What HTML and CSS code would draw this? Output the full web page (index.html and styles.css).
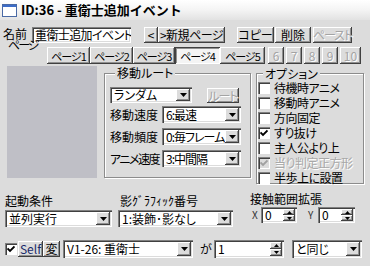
FILE: index.html
```html
<!DOCTYPE html>
<html>
<head>
    <meta charset="utf-8">
    <link rel="stylesheet" href="styles.css">
</head>
<body>
    <div class="title-bar">
        <svg class="app-icon" width="15" height="13" viewBox="0 0 15 13">
            <rect x="0.5" y="0.5" width="14" height="12" fill="#fff" stroke="#4a6aa5"/>
            <rect x="1" y="1" width="13" height="2" fill="#3d6cc8"/>
        </svg>
        <span class="title-text">ID:36 - 重衛士追加イベント</span>
    </div>

    <div class="dialog">
        <!-- name + page commands -->
        <div class="name-row">
            <span class="name-label">名前</span>
            <div class="textbox name-box">重衛士追加イベント</div>
            <div class="btn prev-btn">&lt;</div>
            <div class="btn new-btn">&gt;新規ページ</div>
            <div class="btn copy-btn">コピー</div>
            <div class="btn del-btn">削除</div>
            <div class="btn paste-btn disabled">ペースト</div>
        </div>

        <!-- page tabs -->
        <div class="page-row">
            <span class="page-label">ページ</span>
            <div class="btn tab">ページ1</div>
            <div class="btn tab">ページ2</div>
            <div class="btn tab tab-3">ページ3</div>
            <div class="btn tab tab-4 active">ページ4</div>
            <div class="btn tab tab-5">ページ5</div>
            <div class="btn tab tab-num first disabled">6</div>
            <div class="btn tab tab-num disabled">7</div>
            <div class="btn tab tab-num disabled">8</div>
            <div class="btn tab tab-num disabled">9</div>
            <div class="btn tab tab-num tab-ten disabled">10</div>
        </div>

        <div class="page-body">
            <div class="preview"></div>

            <div class="group route-group">
                <span class="group-title">移動ルート</span>
                <div class="route-top">
                    <div class="combo route-combo">
                        <span class="combo-text">ランダム</span>
                        <span class="btn combo-arrow"><svg width="7" height="4" viewBox="0 0 7 4"><path d="M0 0h7L3.5 4z"/></svg></span>
                    </div>
                    <div class="btn route-btn disabled">ルート</div>
                </div>
                <div class="param-row">
                    <span class="param-label">移動速度</span>
                    <div class="combo param-combo">
                        <span class="combo-text">6:最速</span>
                        <span class="btn combo-arrow"><svg width="7" height="4" viewBox="0 0 7 4"><path d="M0 0h7L3.5 4z"/></svg></span>
                    </div>
                </div>
                <div class="param-row">
                    <span class="param-label">移動頻度</span>
                    <div class="combo param-combo">
                        <span class="combo-text">0:毎フレーム</span>
                        <span class="btn combo-arrow"><svg width="7" height="4" viewBox="0 0 7 4"><path d="M0 0h7L3.5 4z"/></svg></span>
                    </div>
                </div>
                <div class="param-row">
                    <span class="param-label anime-label">アニメ速度</span>
                    <div class="combo param-combo">
                        <span class="combo-text">3:中間隔</span>
                        <span class="btn combo-arrow"><svg width="7" height="4" viewBox="0 0 7 4"><path d="M0 0h7L3.5 4z"/></svg></span>
                    </div>
                </div>
            </div>

            <div class="group option-group">
                <span class="group-title">オプション</span>
                <div class="option"><span class="check"></span>待機時アニメ</div>
                <div class="option"><span class="check"></span>移動時アニメ</div>
                <div class="option"><span class="check"></span>方向固定</div>
                <div class="option"><span class="check"><svg width="8" height="8" viewBox="0 0 8 8"><path d="M0.5 3.5l2.5 2.5 4.5-4.5" fill="none" stroke="#000" stroke-width="1.8"/></svg></span>すり抜け</div>
                <div class="option"><span class="check"></span>主人公より上</div>
                <div class="option disabled"><span class="check"><svg width="8" height="8" viewBox="0 0 8 8"><path d="M0.5 3.5l2.5 2.5 4.5-4.5" fill="none" stroke="#a0a0a0" stroke-width="1.8"/></svg></span>当り判定正方形</div>
                <div class="option"><span class="check"></span>半歩上に設置</div>
            </div>
        </div>

        <div class="trigger-row">
            <div class="field start-field">
                <span class="field-label">起動条件</span>
                <div class="combo start-combo">
                    <span class="combo-text">並列実行</span>
                    <span class="btn combo-arrow"><svg width="7" height="4" viewBox="0 0 7 4"><path d="M0 0h7L3.5 4z"/></svg></span>
                </div>
            </div>
            <div class="field shadow-field">
                <span class="field-label">影ｸﾞﾗﾌｨｯｸ番号</span>
                <div class="combo shadow-combo">
                    <span class="combo-text">1:装飾･影なし</span>
                    <span class="btn combo-arrow"><svg width="7" height="4" viewBox="0 0 7 4"><path d="M0 0h7L3.5 4z"/></svg></span>
                </div>
            </div>
            <div class="field hit-field">
                <span class="hit-label">接触範囲拡張</span>
                <div class="hit-spins">
                    <span class="axis">X</span>
                    <div class="spin hit-spin">
                        <span class="spin-text">0</span>
                        <span class="spin-btns">
                            <span class="btn"><svg width="5" height="3" viewBox="0 0 5 3"><path d="M0 3h5L2.5 0z"/></svg></span>
                            <span class="btn"><svg width="5" height="3" viewBox="0 0 5 3"><path d="M0 0h5L2.5 3z"/></svg></span>
                        </span>
                    </div>
                    <span class="axis y-axis">Y</span>
                    <div class="spin hit-spin">
                        <span class="spin-text">0</span>
                        <span class="spin-btns">
                            <span class="btn"><svg width="5" height="3" viewBox="0 0 5 3"><path d="M0 3h5L2.5 0z"/></svg></span>
                            <span class="btn"><svg width="5" height="3" viewBox="0 0 5 3"><path d="M0 0h5L2.5 3z"/></svg></span>
                        </span>
                    </div>
                </div>
            </div>
        </div>

        <div class="cond-row">
            <span class="check"><svg width="8" height="8" viewBox="0 0 8 8"><path d="M0.5 3.5l2.5 2.5 4.5-4.5" fill="none" stroke="#000" stroke-width="1.8"/></svg></span>
            <div class="btn self-btn">Self</div>
            <div class="btn var-btn">変</div>
            <div class="combo var-combo">
                <span class="combo-text">V1-26: 重衛士</span>
                <span class="btn combo-arrow"><svg width="7" height="4" viewBox="0 0 7 4"><path d="M0 0h7L3.5 4z"/></svg></span>
            </div>
            <span class="ga">が</span>
            <div class="spin value-spin">
                <span class="spin-text">1</span>
                <span class="spin-btns">
                    <span class="btn"><svg width="5" height="3" viewBox="0 0 5 3"><path d="M0 3h5L2.5 0z"/></svg></span>
                    <span class="btn"><svg width="5" height="3" viewBox="0 0 5 3"><path d="M0 0h5L2.5 3z"/></svg></span>
                </span>
            </div>
            <div class="combo cmp-combo">
                <span class="combo-text">と同じ</span>
                <span class="btn combo-arrow"><svg width="7" height="4" viewBox="0 0 7 4"><path d="M0 0h7L3.5 4z"/></svg></span>
            </div>
        </div>
    </div>
</body>
</html>
```

FILE: styles.css
```css
body {
    margin: 0;
    width: 370px;
    height: 266px;
    overflow: hidden;
    background: #dcdcdc;
    font-family: "Noto Sans CJK JP", "Noto Sans", sans-serif;
    font-size: 12px;
    line-height: 12px;
    font-feature-settings: "palt";
    color: #000;
}

.title-bar {
    height: 20px;
    display: flex;
    align-items: center;
    padding-left: 2px;
    background: linear-gradient(#ffffff, #f4f4f4 50%, #e2e2e2);
}

.app-icon {
    margin-right: 4px;
}

.title-text {
    font-size: 13px;
    font-weight: bold;
    font-feature-settings: normal;
}

.dialog {
    padding: 7px 0 0 3px;
}

/* classic raised button */
.btn {
    box-sizing: border-box;
    display: flex;
    align-items: center;
    justify-content: center;
    background: #dcdcdc;
    box-shadow: inset -1px -1px #404040, inset 1px 1px #fff, inset -2px -2px #909090;
    white-space: nowrap;
}

.btn.disabled {
    color: #a4a4a4;
    text-shadow: 1px 1px #fff;
}

/* sunken fields */
.textbox,
.combo,
.spin {
    box-sizing: border-box;
    background: #fff;
    box-shadow: inset 1px 1px #808080, inset 2px 2px #404040, inset -1px -1px #fff, inset -2px -2px #dcdcdc;
}

.combo,
.spin {
    display: flex;
    align-items: center;
    padding: 2px;
}

.combo-text,
.spin-text {
    flex: 1;
    padding-left: 2px;
    white-space: nowrap;
    overflow-x: clip;
}

.combo-arrow {
    align-self: stretch;
    width: 14px;
}

.spin-btns {
    align-self: stretch;
    display: flex;
    flex-direction: column;
    width: 12px;
}

.spin-btns .btn {
    flex: 1;
}

/* name row */
.name-row {
    display: flex;
    height: 16px;
}

.name-row .btn {
    height: 16px;
}

.name-label {
    width: 29px;
    padding-top: 1px;
}

.name-box {
    width: 99px;
    height: 16px;
    padding: 2px 0 0 3px;
    overflow-x: clip;
    white-space: nowrap;
    letter-spacing: -0.6px;
}

.prev-btn {
    margin-left: 13px;
    width: 14px;
}

.new-btn {
    width: 67px;
    letter-spacing: -0.5px;
}

.copy-btn {
    margin-left: 12px;
    width: 37px;
}

.del-btn {
    margin-left: 1px;
    width: 36px;
}

.paste-btn {
    margin-left: 2px;
    width: 39px;
    letter-spacing: -1px;
}

/* page tabs */
.page-row {
    display: flex;
    height: 17px;
    margin-top: 4px;
}

.page-label {
    width: 39px;
    margin: -8px 0 0 5px;
    align-self: flex-start;
    letter-spacing: -2px;
}

.tab {
    width: 43px;
    height: 17px;
    font-size: 11px;
    letter-spacing: -1px;
}

.tab-3 {
    width: 42px;
}

.tab-4,
.tab-5 {
    width: 45px;
}

.tab.active {
    background: #f4f4f4;
    box-shadow: inset 1px 1px #404040, inset -1px -1px #fff, inset 2px 2px #909090;
}

.tab-num {
    width: 16px;
    margin-left: 2px;
    font-size: 12px;
    letter-spacing: 0;
}

.tab-num.first {
    margin-left: 3px;
}

.tab-ten {
    width: 21px;
}

/* preview + groups */
.page-body {
    display: flex;
    align-items: flex-start;
    height: 118px;
    margin-top: 2px;
}

.preview {
    margin-left: 4px;
    width: 90px;
    height: 112px;
    background: #bfbfc6;
}

.group {
    box-sizing: border-box;
    margin-top: 7px;
    border: 1px solid #8c8c8c;
    box-shadow: inset 1px 1px #fff, 1px 1px #fff;
}

.group-title {
    display: block;
    width: fit-content;
    height: 12px;
    margin: -7px 0 0 5px;
    padding: 0 2px;
    background: #dcdcdc;
}

.route-group {
    margin-left: 7px;
    width: 147px;
    height: 105px;
    padding-left: 5px;
}

.route-top {
    display: flex;
    margin-top: 8px;
}

.route-combo {
    width: 82px;
    height: 16px;
}

.route-btn {
    margin: 1px 0 0 15px;
    width: 32px;
    height: 15px;
    letter-spacing: -1px;
}

.param-row {
    display: flex;
    align-items: center;
    margin-top: 3px;
}

.param-row + .param-row {
    margin-top: 5px;
}

.param-label {
    width: 52px;
    white-space: nowrap;
}

.anime-label {
    letter-spacing: -1.5px;
}

.param-combo {
    width: 79px;
    height: 17px;
}

.param-combo .combo-text {
    letter-spacing: -1px;
}

.option-group {
    margin-left: 5px;
    width: 108px;
    height: 111px;
    padding: 1px 0 0 1px;
}

.option {
    display: flex;
    align-items: center;
    height: 15px;
    white-space: nowrap;
    letter-spacing: -0.5px;
}

.option.disabled {
    color: #a8a8a8;
    text-shadow: 1px 1px #fff;
}

.check {
    box-sizing: border-box;
    display: flex;
    align-items: center;
    justify-content: center;
    width: 12px;
    height: 12px;
    margin-right: 4px;
    background: #fff;
    box-shadow: inset 1px 1px #808080, inset 2px 2px #404040, inset -1px -1px #fff;
}

.option.disabled .check {
    background: #dcdcdc;
}

/* trigger / shadow / hit area */
.trigger-row {
    display: flex;
    margin-top: 8px;
}

.field {
    display: flex;
    flex-direction: column;
}

.field-label {
    height: 18px;
    line-height: 18px;
}

.start-field {
    margin-left: 2px;
}

.start-combo {
    width: 107px;
    height: 17px;
}

.shadow-field {
    margin-left: 6px;
}

.shadow-field .field-label {
    padding-left: 2px;
}

.shadow-combo {
    width: 115px;
    height: 17px;
}

.hit-field {
    margin-left: 17px;
}

.hit-label {
    height: 13px;
    line-height: 13px;
}

.hit-spins {
    display: flex;
    align-items: center;
    height: 16px;
    margin-top: 2px;
}

.axis {
    width: 9px;
    margin-left: 2px;
    font-size: 10px;
    color: #333;
}

.y-axis {
    margin-left: 11px;
    width: 10px;
}

.hit-spin {
    width: 36px;
    height: 16px;
}

.hit-spin + .y-axis + .hit-spin {
    width: 37px;
}

/* condition row */
.cond-row {
    display: flex;
    align-items: center;
    height: 18px;
    margin-top: 13px;
    padding-left: 2px;
}

.cond-row .check {
    margin-right: 1px;
}

.self-btn {
    width: 25px;
    height: 16px;
    color: #1a2a6a;
}

.var-btn {
    width: 17px;
    height: 16px;
}

.var-combo {
    margin-left: 3px;
    width: 130px;
    height: 18px;
}

.ga {
    width: 14px;
    margin-left: 7px;
}

.value-spin {
    width: 70px;
    height: 18px;
}

.cmp-combo {
    margin-left: 8px;
    width: 70px;
    height: 18px;
}
```
